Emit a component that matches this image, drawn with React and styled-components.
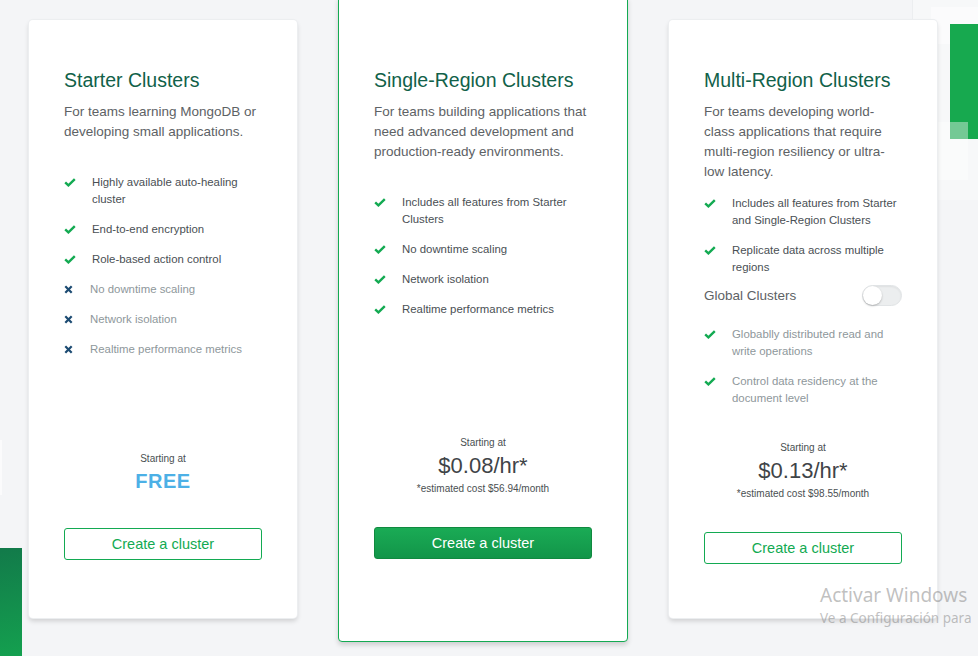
import React from 'react'
import styled, { createGlobalStyle } from 'styled-components'

const GlobalStyle = createGlobalStyle`
  html, body {
    margin: 0;
    padding: 0;
    background: #f4f5f7;
    overflow: hidden;
  }
  body {
    font-family: "Liberation Sans", Arial, sans-serif;
  }
`

const Page = styled.div`
  position: relative;
  width: 978px;
  height: 656px;
  overflow: hidden;
  background: #f4f5f7;
`

// background decorations sitting behind the cards
const Deco = styled.div`
  position: absolute;
  pointer-events: none;
`
const SidePanel = styled(Deco)`
  left: 912px;
  top: 0;
  width: 66px;
  height: 200px;
  background: #f7f8f9;
  border-left: 1px solid #eceef0;
`
const WhiteBox = styled(Deco)`
  left: 931px;
  top: 7px;
  width: 47px;
  height: 37px;
  background: #fbfbfc;
`
const GreenBox = styled(Deco)`
  left: 950px;
  top: 24px;
  width: 28px;
  height: 115px;
  background: #17a94f;
`
const PaleBox = styled(Deco)`
  left: 937px;
  top: 122px;
  width: 31px;
  height: 58px;
  background: rgba(250, 251, 251, 0.92);
`
const PaleGreen = styled(Deco)`
  left: 950px;
  top: 122px;
  width: 18px;
  height: 17px;
  background: #74c995;
`
const LeftGhost = styled(Deco)`
  left: 0;
  top: 440px;
  width: 2px;
  height: 55px;
  background: #fbfbfc;
`
const LeftGreen = styled(Deco)`
  left: 0;
  top: 548px;
  width: 22px;
  height: 108px;
  background: linear-gradient(170deg, #127a4a 0%, #14a04f 100%);
`

const Row = styled.div`
  position: relative;
  display: flex;
  align-items: flex-start;
  gap: 41px;
  padding: 20px 0 0 29px;
`

const Card = styled.div`
  box-sizing: border-box;
  display: flex;
  flex-direction: column;
  width: ${p => (p.$featured ? 290 : 268)}px;
  height: ${p => (p.$featured ? 646 : 598)}px;
  margin-top: ${p => (p.$featured ? -24 : 0)}px;
  padding: ${p => p.$padTop}px 35px ${p => p.$padBottom}px;
  background: #fff;
  border: ${p => (p.$featured ? '1px solid #13aa52' : 'none')};
  border-radius: 4px;
  box-shadow: ${p =>
    p.$featured
      ? '0 3px 5px rgba(0, 0, 0, 0.16)'
      : '0 0 0 1px #eceef0, 0 3px 5px rgba(0, 0, 0, 0.16)'};
`

const Title = styled.h2`
  margin: 0;
  font-size: 19.5px;
  line-height: 24px;
  font-weight: normal;
  color: #116149;
  white-space: nowrap;
`

const Desc = styled.p`
  margin: 10px 0 0;
  font-size: 13.5px;
  line-height: 20px;
  color: #5d6265;
  span {
    display: block;
    white-space: nowrap;
  }
`

const List = styled.ul`
  list-style: none;
  margin: ${p => p.$top}px 0 0;
  padding: 0;
  display: flex;
  flex-direction: column;
  gap: 13px;
`

const Item = styled.li`
  display: flex;
  align-items: flex-start;
  gap: ${p => (p.$off ? 17 : 16)}px;
  font-size: 11.4px;
  line-height: 17px;
  color: ${p => (p.$muted ? '#8e979b' : '#494f54')};
`

const IconBox = styled.span`
  flex: none;
  height: 17px;
  display: flex;
  align-items: center;
`

const ToggleRow = styled.div`
  margin-top: 8px;
  height: 22px;
  display: flex;
  align-items: center;
  justify-content: space-between;
  font-size: 13.5px;
  color: #5d6265;
`

const Toggle = styled.span`
  position: relative;
  box-sizing: border-box;
  width: 40px;
  height: 21px;
  border-radius: 11px;
  background: #eceeef;
  border: 1px solid #e1e4e6;
  box-shadow: inset 0 1px 2px rgba(0, 0, 0, 0.06);
`

const Knob = styled.span`
  position: absolute;
  left: 0;
  top: 0;
  width: 19px;
  height: 19px;
  border-radius: 50%;
  background: #fff;
  box-shadow: 0 1px 2px rgba(0, 0, 0, 0.25);
`

const Price = styled.div`
  margin-top: auto;
  display: flex;
  flex-direction: column;
  align-items: center;
  color: #3f4448;
`

const StartLabel = styled.div`
  font-size: 10px;
  line-height: 16px;
  color: #4a4f52;
`

const Amount = styled.div`
  font-size: ${p => (p.$free ? 20 : 22)}px;
  line-height: ${p => (p.$free ? 28 : 30)}px;
  font-weight: ${p => (p.$free ? 'bold' : 'normal')};
  color: ${p => (p.$free ? '#4cb0e6' : '#3f4448')};
  letter-spacing: ${p => (p.$free ? '0.5px' : '0')};
`

const Estimate = styled.div`
  font-size: 10px;
  line-height: 16px;
  color: #4a4f52;
`

const Button = styled.button`
  box-sizing: border-box;
  margin-top: ${p => p.$gap}px;
  width: 100%;
  height: 32px;
  border-radius: 3px;
  font-family: "Liberation Sans", Arial, sans-serif;
  font-size: 14.5px;
  cursor: pointer;
  border: 1px solid ${p => (p.$solid ? '#10893f' : '#13aa52')};
  color: ${p => (p.$solid ? '#fff' : '#13aa52')};
  background: ${p => (p.$solid ? 'linear-gradient(#1aab55, #129549)' : '#fff')};
`

const Watermark = styled.div`
  position: absolute;
  left: 820px;
  top: 582px;
  font-family: "Noto Sans", "Open Sans", sans-serif;
  color: rgba(130, 130, 130, 0.5);
  white-space: nowrap;
  pointer-events: none;
`
const WmTitle = styled.div`
  font-size: 19px;
  line-height: 27px;
`
const WmSub = styled.div`
  font-size: 13.5px;
  line-height: 18px;
`

const Check = () => (
  <svg width="12" height="9" viewBox="0 0 12 9">
    <path d="M1.2 4.4 L4.4 7.4 L10.8 1.2" fill="none" stroke="#13aa52" strokeWidth="2.4" />
  </svg>
)

const Cross = () => (
  <svg width="9" height="9" viewBox="0 0 9 9">
    <path d="M1.3 1.3 L7.7 7.7 M7.7 1.3 L1.3 7.7" fill="none" stroke="#1c4b72" strokeWidth="2.2" />
  </svg>
)

const Feature = ({ off, muted, children }) => (
  <Item $off={off} $muted={muted || off}>
    <IconBox>{off ? <Cross /> : <Check />}</IconBox>
    <span>{children}</span>
  </Item>
)

const plans = [
  {
    title: 'Starter Clusters',
    desc: ['For teams learning MongoDB or', 'developing small applications.'],
  },
  {
    title: 'Single-Region Clusters',
    desc: ['For teams building applications that', 'need advanced development and', 'production-ready environments.'],
  },
  {
    title: 'Multi-Region Clusters',
    desc: ['For teams developing world-', 'class applications that require', 'multi-region resiliency or ultra-', 'low latency.'],
  },
]

const Head = ({ plan }) => (
  <>
    <Title>{plan.title}</Title>
    <Desc>
      {plan.desc.map(line => (
        <span key={line}>{line}</span>
      ))}
    </Desc>
  </>
)

const App = () => {
  return (
    <Page>
      <GlobalStyle />
      <SidePanel />
      <WhiteBox />
      <GreenBox />
      <PaleBox />
      <PaleGreen />
      <LeftGhost />
      <LeftGreen />

      <Row>
        <Card $padTop={48} $padBottom={58}>
          <Head plan={plans[0]} />
          <List $top={32}>
            <Feature>Highly available auto-healing cluster</Feature>
            <Feature>End-to-end encryption</Feature>
            <Feature>Role-based action control</Feature>
            <Feature off>No downtime scaling</Feature>
            <Feature off>Network isolation</Feature>
            <Feature off>Realtime performance metrics</Feature>
          </List>
          <Price>
            <StartLabel>Starting at</StartLabel>
            <Amount $free>FREE</Amount>
          </Price>
          <Button $gap={33}>Create a cluster</Button>
        </Card>

        <Card $featured $padTop={71} $padBottom={82}>
          <Head plan={plans[1]} />
          <List $top={32}>
            <Feature>Includes all features from Starter Clusters</Feature>
            <Feature>No downtime scaling</Feature>
            <Feature>Network isolation</Feature>
            <Feature>Realtime performance metrics</Feature>
          </List>
          <Price>
            <StartLabel>Starting at</StartLabel>
            <Amount>$0.08/hr*</Amount>
            <Estimate>*estimated cost $56.94/month</Estimate>
          </Price>
          <Button $solid $gap={30}>Create a cluster</Button>
        </Card>

        <Card $padTop={48} $padBottom={54}>
          <Head plan={plans[2]} />
          <List $top={13}>
            <Feature>Includes all features from Starter and Single-Region Clusters</Feature>
            <Feature>Replicate data across multiple regions</Feature>
          </List>
          <ToggleRow>
            Global Clusters
            <Toggle>
              <Knob />
            </Toggle>
          </ToggleRow>
          <List $top={20}>
            <Feature muted>Globablly distributed read and write operations</Feature>
            <Feature muted>Control data residency at the document level</Feature>
          </List>
          <Price>
            <StartLabel>Starting at</StartLabel>
            <Amount>$0.13/hr*</Amount>
            <Estimate>*estimated cost $98.55/month</Estimate>
          </Price>
          <Button $gap={30}>Create a cluster</Button>
        </Card>
      </Row>

      <Watermark>
        <WmTitle>Activar Windows</WmTitle>
        <WmSub>Ve a Configuración para</WmSub>
      </Watermark>
    </Page>
  )
}

export default App
